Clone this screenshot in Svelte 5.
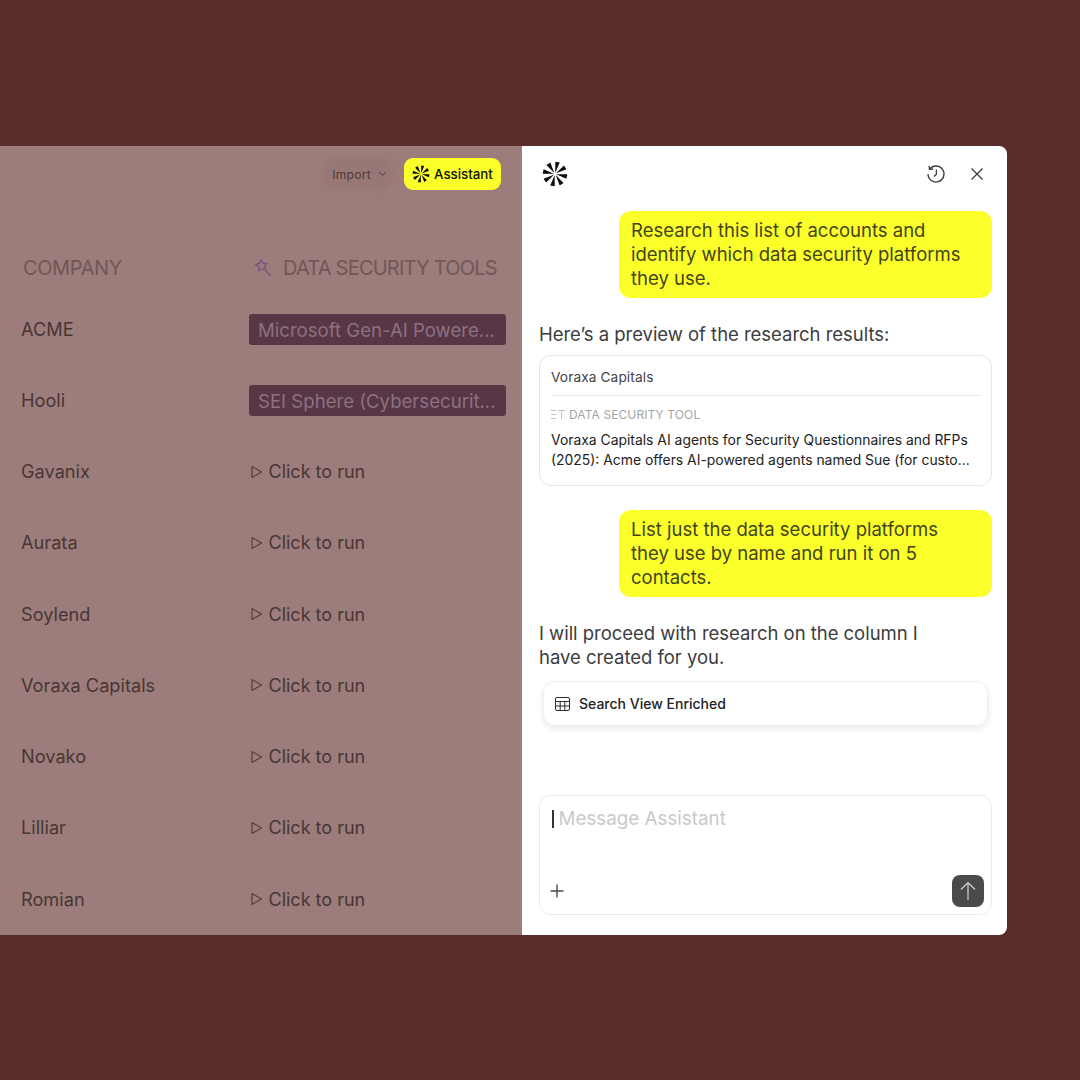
<script>
  const spokes = [0, 45, 90, 135, 180, 225, 270, 315];
  const rows = [
    { name: 'ACME', tag: 'Microsoft Gen-AI Powere...' },
    { name: 'Hooli', tag: 'SEI Sphere (Cybersecurit...' },
    { name: 'Gavanix' }, { name: 'Aurata' }, { name: 'Soylend' },
    { name: 'Voraxa Capitals' }, { name: 'Novako' }, { name: 'Lilliar' }, { name: 'Romian' }
  ];
</script>

{#snippet logo(size)}
  <svg width={size} height={size} viewBox="0 0 24 24" aria-hidden="true">
    {#each spokes as a}
      <path d="M12 10.800 L9.900 .8 L14.100 .8 Z" fill="#0b0b0b" transform="rotate({a + 12} 12 12)" />
    {/each}
  </svg>
{/snippet}

<div class="stage">
  <section class="sheet">
    <div class="toolbar">
      <div class="import">Import
        <svg width="9" height="6" viewBox="0 0 9 6"><path d="M1 1l3.500 3.500L8 1" fill="none" stroke="#4d3a3a" stroke-width="1"/></svg>
      </div>
      <div class="assistant">{@render logo(18)}<span>Assistant</span></div>
    </div>
    <div class="head">
      <div class="h-co">COMPANY</div>
      <div class="h-tools">
        <svg width="18" height="18" viewBox="0 0 18 18" fill="none" stroke="#6f4f80" stroke-width="1.100">
          <path d="M6.800 .8l2.200 3.300 3.900.1-2.400 3 1.100 3.700-3.700-1.300-3.200 2.200.1-3.900L1.700 5.500l3.800-1.100z"/>
          <path d="M11.500 11.500l5 5"/>
        </svg>
        <span>DATA SECURITY TOOLS</span>
      </div>
    </div>
    <div class="rows">
      {#each rows as r}
        <div class="row">
          <div class="name">{r.name}</div>
          {#if r.tag}
            <div class="tag">{r.tag}</div>
          {:else}
            <div class="run">
              <svg width="13" height="14" viewBox="0 0 13 14"><path d="M2 1.500l9.500 5.500L2 12.500z" fill="none" stroke="#4f3d3d" stroke-width="1.100" stroke-linejoin="round"/></svg>
              Click to run
            </div>
          {/if}
        </div>
      {/each}
    </div>
  </section>

  <aside class="panel">
    <div class="top">
      {@render logo(26)}
      <div class="top-icons">
        <svg width="20" height="20" viewBox="0 0 20 20" fill="none" stroke="#3d3d3d" stroke-width="1.300">
          <path d="M3.600 5.200A8 8 0 1 1 2 10"/>
          <path d="M3 1.800l.5 3.600 3.600-.4"/>
          <path d="M10.400 5.500v4.700L8 12.400"/>
        </svg>
        <svg width="14" height="14" viewBox="0 0 14 14" fill="none" stroke="#3d3d3d" stroke-width="1.300"><path d="M1.500 1.500l11 11M12.500 1.500l-11 11"/></svg>
      </div>
    </div>

    <div class="bubble b1">Research this list of accounts and identify which data security platforms they use.</div>
    <p class="reply r1">Here’s a preview of the research results:</p>

    <div class="card">
      <div class="card-title">Voraxa Capitals</div>
      <div class="card-label">
        <svg width="14" height="11" viewBox="0 0 14 11" fill="none" stroke="#c4c4c4" stroke-width="1"><path d="M0 1.500h5M0 5.500h5M0 9.500h5M7 1.500h7M10.500 1.500v8.500"/></svg>
        DATA SECURITY TOOL
      </div>
      <div class="card-text">Voraxa Capitals AI agents for Security Questionnaires and RFPs (2025): Acme offers AI-powered agents named Sue (for custo...</div>
    </div>

    <div class="bubble b2">List just the data security platforms they use by name and run it on 5 contacts.</div>
    <p class="reply r2">I will proceed with research on the column I have created for you.</p>

    <div class="view">
      <svg width="15" height="14" viewBox="0 0 15 14" fill="none" stroke="#2b2b2b" stroke-width="1"><rect x=".5" y=".5" width="14" height="13" rx="1.500"/><path d="M.5 4.500h14M.5 9h14M5.200 4.500V13.500M9.800 4.500V13.500"/></svg>
      Search View Enriched
    </div>

    <div class="composer">
      <div class="input"><i class="caret"></i>Message Assistant</div>
      <div class="actions">
        <svg width="14" height="14" viewBox="0 0 14 14" fill="none" stroke="#4a4a4a" stroke-width="1.400"><path d="M7 .5v13M.5 7h13"/></svg>
        <div class="send">
          <svg width="16" height="20" viewBox="0 0 16 20" fill="none" stroke="#d4d4d4" stroke-width="1.200"><path d="M8 19V1.500M1 8.500l7-7 7 7"/></svg>
        </div>
      </div>
    </div>
  </aside>
</div>

<style>
  :global(body) { margin: 0; background: #5a2d2d; }
  .stage {
    height: 1080px;
    box-sizing: border-box;
    padding-top: 146px;
    display: flex;
    align-items: flex-start;
    font-family: Inter, "Liberation Sans", sans-serif;
  }
  .sheet {
    width: 522px;
    height: 789px;
    flex: none;
    background: #9c7d7b;
    overflow: hidden;
  }
  .toolbar {
    height: 97px;
    box-sizing: border-box;
    padding: 12px 21px 0 0;
    display: flex;
    justify-content: flex-end;
    align-items: flex-start;
    gap: 14px;
  }
  .import {
    height: 28px;
    margin-top: 2px;
    display: flex;
    align-items: center;
    gap: 7px;
    padding: 0 3px 0 6px;
    border-radius: 8px;
    background: #977876;
    box-shadow: 0 0 6px 2px #977876;
    color: #4d3a3a;
    font-size: 12px;
    letter-spacing: .3px;
  }
  .assistant {
    width: 97px;
    height: 32px;
    box-sizing: border-box;
    padding-left: 8px;
    display: flex;
    align-items: center;
    gap: 4px;
    background: #fbff2a;
    border-radius: 9px;
    color: #111;
    font-size: 13.300px;
    font-weight: 500;
  }
  .head {
    height: 50px;
    border-top: 1px solid #987977;
    border-bottom: 1px solid #987977;
    box-sizing: border-box;
    display: flex;
    align-items: center;
    margin-right: 10px;
    font-size: 20px;
    letter-spacing: -.4px;
    color: #705857;
  }
  .h-co { width: 252px; padding-left: 23px; box-sizing: border-box; }
  .h-tools { display: flex; align-items: center; gap: 11px; margin-left: 2px; white-space: nowrap; letter-spacing: -.78px; }
  .rows {
    display: grid;
    grid-auto-rows: 71.250px;
    padding-top: 1px;
  }
  .row {
    display: grid;
    grid-template-columns: 248.500px 257px;
    align-items: center;
    font-size: 18.200px;
    color: #483635;
  }
  .name { padding-left: 21px; padding-bottom: 2px; }
  .tag {
    height: 31px;
    box-sizing: border-box;
    padding-left: 9.500px;
    display: flex;
    align-items: center;
    background: #573646;
    border-radius: 3px;
    color: #8d7180;
    font-size: 18.600px;
    white-space: nowrap;
    overflow: hidden;
  }
  .run { display: flex; align-items: center; gap: 6px; font-size: 18px; padding-left: 1px; padding-bottom: 1px; }
  .panel {
    width: 485px;
    height: 789px;
    flex: none;
    box-sizing: border-box;
    background: #fff;
    border-radius: 0 8px 8px 0;
    padding: 0 15px 20px 17px;
    display: flex;
    flex-direction: column;
    color: #3c3c3c;
  }
  .top {
    height: 65px;
    flex: none;
    display: flex;
    align-items: center;
    justify-content: space-between;
    padding-left: 3px;
    margin-top: -5px;
    margin-bottom: 5px;
  }
  .top-icons { display: flex; align-items: center; gap: 24px; padding-right: 8px; }
  .bubble {
    align-self: flex-end;
    width: 373px;
    box-sizing: border-box;
    padding: 7px 12px 8px 12px;
    background: #fbff2a;
    border-radius: 12px;
    font-size: 18.500px;
    line-height: 24px;
    color: #44441a;
  }
  .reply { margin: 0; font-size: 18.500px; line-height: 24px; letter-spacing: -.03px; }
  .r1 { margin-top: 24px; }
  .r2 { margin-top: 24px; width: 400px; }
  .card {
    margin-top: 9px;
    height: 131px;
    box-sizing: border-box;
    border: 1px solid #e6e6e6;
    border-radius: 12px;
    padding: 0 11px;
  }
  .card-title {
    height: 39px;
    line-height: 42px;
    border-bottom: 1px solid #e6e6e6;
    font-size: 13.700px;
    color: #444;
    letter-spacing: .1px;
  }
  .card-label {
    display: flex;
    align-items: center;
    gap: 4px;
    margin-top: 11px;
    font-size: 12px;
    color: #a5a5a5;
    letter-spacing: .1px;
  }
  .card-text {
    margin-top: 8px;
    font-size: 13.900px;
    line-height: 20px;
    color: #222;
  }
  .b2 { margin-top: 24px; }
  .view {
    margin: 12px 4px 0 4px;
    height: 43px;
    flex: none;
    display: flex;
    align-items: center;
    gap: 9px;
    padding-left: 11px;
    border-radius: 12px;
    border: 1px solid #f0f0f0;
    box-shadow: 0 3px 6px rgba(0, 0, 0, .09);
    font-size: 14px;
    font-weight: 500;
    color: #222;
  }
  .composer {
    margin-top: auto;
    height: 120px;
    box-sizing: border-box;
    border: 1px solid #ebebeb;
    border-radius: 12px;
    padding: 11px 7px 7px 10px;
    display: flex;
    flex-direction: column;
    justify-content: space-between;
  }
  .input {
    display: flex;
    align-items: center;
    gap: 5px;
    padding-left: 2px;
    font-size: 18.800px;
    line-height: 24px;
    color: #c9c9c9;
  }
  .caret { width: 1.500px; height: 18px; background: #333; }
  .actions { display: flex; align-items: center; justify-content: space-between; }
  .send {
    width: 32px;
    height: 32px;
    border-radius: 8px;
    background: #4a4a4a;
    display: flex;
    align-items: center;
    justify-content: center;
  }
</style>
